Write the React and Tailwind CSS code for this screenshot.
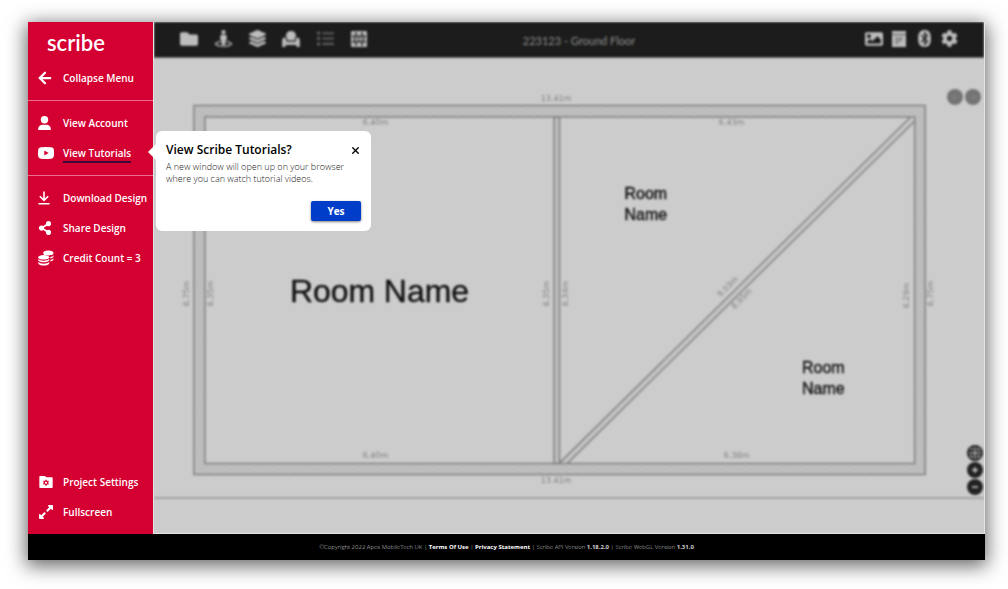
import React, { useState } from 'react';
import { FaBluetooth, FaCog, FaExpandAlt, FaFolder, FaImage, FaLayerGroup, FaList, FaShareAlt, FaStreetView } from 'react-icons/fa';
import { RiFolderSettingsFill } from 'react-icons/ri';
import { ArrowLeft, X } from 'lucide-react';

const PersonIcon = () => (
  <svg viewBox="0 0 14 14" className="h-3.5 w-3.5" fill="currentColor">
    <circle cx="6.500" cy="3.700" r="3.700" />
    <path d="M.5 14q-.5 0-.4-.8Q.5 8.700 4.500 8.700h4q4 0 4.400 4.500.1.8-.5.8Z" />
  </svg>
);

const YoutubeIcon = () => (
  <svg viewBox="0 0 16 12" className="w-4 h-3" fill="currentColor">
    <path fillRule="evenodd" d="M3 .2Q8-.2 13 .2 15.800.4 15.900 3q.2 3 0 6-.3 2.500-2.900 2.800-5 .4-10 0Q.4 11.500.1 9-.1 6 .1 3 .4.500 3 .2ZM6.300 3.500v5l4.400-2.500Z" />
  </svg>
);

const DownloadIcon = () => (
  <svg viewBox="0 0 12 14" className="h-3.5 w-3" fill="none" stroke="currentColor" strokeWidth="1.600">
    <path d="M6 .5v8.300M1.800 5.200 6 9.300l4.200-4.100M.5 12.700h11" />
  </svg>
);

const CoinsIcon = () => (
  <svg viewBox="0 0 16 16" className="w-4 h-4" fill="currentColor">
    <ellipse cx="10.300" cy="2.900" rx="5.200" ry="2.500" />
    <path d="M12.200 7.100q2.700-.5 3.400-1.900v1.400q-.6 1.500-3.200 2ZM12.400 10q2.400-.5 3.100-1.800v1.400q-.6 1.400-3.100 1.900Z" />
    <ellipse cx="5.700" cy="7.300" rx="5.500" ry="2.300" />
    <path d="M.3 9q1.300 1.700 5.400 1.700T11.200 9v1.400q-1.300 1.800-5.500 1.800T.3 10.400ZM.3 12q1.300 1.700 5.400 1.700T11.200 12v1.600q-1.300 2-5.500 2t-5.400-2Z" />
  </svg>
);

const ArmchairIcon = () => (
  <svg viewBox="0 0 18 16" className="h-4 w-[18px]" fill="currentColor">
    <path d="M4 5.500Q4 0 9 0t5 5.500Q12.800 6.500 12.500 9.500h-7Q5.200 6.500 4 5.500Z" />
    <path d="M2.500 6.500q1.900.2 2 4.300h9q.1-4.100 2-4.300 2.300.3 2.300 3.500v6h-3.300v-2h-11v2H.2v-6q0-3.200 2.300-3.500Z" />
  </svg>
);

const TilesIcon = () => (
  <svg viewBox="0 0 16 16" className="w-4 h-4">
    <rect width="16" height="16" rx="1" fill="#b8b8b8" />
    <path d="M1 5.300h14M1 10.700h14M5 1v4.300M11 1v4.300M3.500 5.300v5.400M12.500 5.300v5.400M5 10.700V15M11 10.700V15" stroke="#333" strokeWidth="1.500" />
    <path d="M8 5.800 10.200 8 8 10.200 5.800 8Z" fill="#b8b8b8" stroke="#333" />
  </svg>
);

const NotesIcon = () => (
  <svg viewBox="0 0 16 16" className="w-4 h-4">
    <path d="M1 0h14v16H1Z" fill="#bdbdbd" />
    <path d="M1 3.500h14M4 7h8M4 9.500h7M4 12h4" stroke="#555" strokeWidth="1.200" />
  </svg>
);

const accountItems = [{ label: 'View Account', icon: <PersonIcon /> }];

const designItems = [
  { label: 'Download Design', icon: <DownloadIcon /> },
  { label: 'Share Design', icon: <FaShareAlt size={14} /> },
  { label: 'Credit Count = 3', icon: <CoinsIcon /> }
];

const bottomItems = [
  { label: 'Project Settings', icon: <RiFolderSettingsFill size={16} /> },
  { label: 'Fullscreen', icon: <FaExpandAlt size={16} /> }
];

const leftTools = [
  { label: 'Projects', icon: <FaFolder size={18} /> },
  { label: 'Street view', icon: <FaStreetView size={17} /> },
  { label: 'Layers', icon: <FaLayerGroup size={17} /> },
  { label: 'Furniture', icon: <ArmchairIcon /> },
  { label: 'List', icon: <FaList size={17} className="text-[#5c5c5c]" /> },
  { label: 'Tiles', icon: <TilesIcon /> }
];

const rightTools = [
  { label: 'Images', icon: <FaImage size={18} /> },
  { label: 'Notes', icon: <NotesIcon /> },
  { label: 'Bluetooth', icon: <FaBluetooth size={17} /> },
  { label: 'Settings', icon: <FaCog size={17} /> }
];

function MenuItem({ icon, label, active }) {
  return (
    <button className="flex h-[30px] w-full items-center gap-[9px] pl-2.5 text-left text-[10px] leading-4 font-semibold whitespace-nowrap">
      <span className="flex w-4 shrink-0 items-center justify-start">{icon}</span>
      <span className={active ? 'border-b-2 border-[#3a0a3c] pt-0.5' : ''}>{label}</span>
    </button>
  );
}

function TutorialPopup({ onClose }) {
  return (
    <div role="dialog" aria-labelledby="popup-title" className="absolute -top-[7px] left-full z-20 ml-[3px] w-[215px] rounded-md bg-white p-2.5 text-black">
      <svg viewBox="0 0 9 18" className="absolute top-3 -left-2 h-[18px] w-[9px]" fill="white">
        <path d="M9 0v18L0 9Z" />
      </svg>
      <div className="flex items-center justify-between">
        <h2 id="popup-title" className="text-[12px] leading-[18px] font-semibold">View Scribe Tutorials?</h2>
        <button aria-label="Close" onClick={onClose}>
          <X size={11} strokeWidth={3} />
        </button>
      </div>
      <p className="mt-0.5 text-[9px] leading-3 font-light text-[#222]">
        A new window will open up on your browser<br />where you can watch tutorial videos.
      </p>
      <div className="mt-4 flex justify-end">
        <button onClick={onClose} className="h-5 w-[50px] rounded-xs bg-[#003dc8] text-[10px] font-bold text-white shadow-sm shadow-black/40">Yes</button>
      </div>
    </div>
  );
}

function Sidebar() {
  const [showPopup, setShowPopup] = useState(true);

  return (
    <nav className="relative z-10 flex w-[125px] shrink-0 flex-col bg-[#d50032] text-white">
      <div className="flex h-[41px] items-center pl-[19px] font-['Lato',sans-serif] text-[22px] leading-6 font-semibold">scribe</div>
      <div className="border-b border-[#e8708c] pb-[7px]">
        <MenuItem label="Collapse Menu" icon={<ArrowLeft size={18} strokeWidth={3} className="-ml-0.5 shrink-0" />} />
      </div>
      <div className="border-b border-[#e8708c] py-[7px]">
        {accountItems.map((item) => <MenuItem key={item.label} {...item} />)}
        <div className="relative">
          <MenuItem label="View Tutorials" icon={<YoutubeIcon />} active />
          {showPopup && <TutorialPopup onClose={() => setShowPopup(false)} />}
        </div>
      </div>
      <div className="pt-[7px]">
        {designItems.map((item) => <MenuItem key={item.label} {...item} />)}
      </div>
      <div className="mt-auto pb-[7px]">
        {bottomItems.map((item) => <MenuItem key={item.label} {...item} />)}
      </div>
    </nav>
  );
}

function Toolbar() {
  return (
    <header className="grid h-9 grid-cols-[1fr_auto_1fr] items-center border-b border-[#666] bg-[#1c1c1c] px-[26px] pb-0.5 text-[#bdbdbd]">
      <div className="flex gap-4">
        {leftTools.map((t) => (
          <button key={t.label} aria-label={t.label} className="flex w-[18px] items-center justify-center">{t.icon}</button>
        ))}
      </div>
      <h1 className="pt-1 pl-5 font-['Lato',sans-serif] text-[11px] leading-4 text-[#8c8c8c]">223123 - Ground Floor</h1>
      <div className="flex justify-end gap-[7px]">
        {rightTools.map((t) => (
          <button key={t.label} aria-label={t.label} className="flex w-[18px] items-center justify-center">{t.icon}</button>
        ))}
      </div>
    </header>
  );
}

function FloorPlan() {
  return (
    <svg viewBox="153 58 832 476" className="h-full w-full">
      <defs>
        <pattern id="hatch" width="4" height="4" patternUnits="userSpaceOnUse" patternTransform="rotate(25)">
          <rect width="4" height="4" fill="#c2c2c2" />
          <path d="M0 1h4" stroke="#afafaf" />
        </pattern>
      </defs>
      {/* walls */}
      <g fill="url(#hatch)" stroke="#808080" strokeWidth="1.500">
        <path fillRule="evenodd" d="M193 105.500H926V475.500H193ZM204 117V464.500H915.500V117Z" />
        <path d="M554 117V464.500H559.500V117Z" />
        <path d="M560 463.500 911 117.500M567 464.500 915.500 121" fill="none" />
        <path d="M563.500 464 913 119.500" strokeWidth="1" stroke="#b0b0b0" />
      </g>
      <path d="M153 499H985" stroke="#a3a3a3" strokeWidth="2" />
      {/* dimensions */}
      <g fill="#808080" fontSize="8" textAnchor="middle" className="font-['DejaVu_Sans',sans-serif]">
        <text x="556" y="101">13.41m</text>
        <text x="556" y="484">13.41m</text>
        <text x="375" y="125">6.40m</text>
        <text x="375" y="459">6.40m</text>
        <text x="732" y="125">6.43m</text>
        <text x="737" y="459">6.38m</text>
        <text transform="translate(188 294) rotate(-90)">6.75m</text>
        <text transform="translate(212 294) rotate(-90)">6.35m</text>
        <text transform="translate(549 294) rotate(-90)">6.35m</text>
        <text transform="translate(568 294) rotate(-90)">6.34m</text>
        <text transform="translate(910 296) rotate(-90)">6.29m</text>
        <text transform="translate(934 294) rotate(-90)">6.75m</text>
        <text transform="translate(730 289) rotate(-45)">9.03m</text>
        <text transform="translate(744 301) rotate(-45)">8.95m</text>
      </g>
      {/* room labels */}
      <g fill="#111" stroke="#111" strokeWidth="0.400" textAnchor="middle" className="font-['Liberation_Sans_Narrow','Arial_Narrow','Liberation_Sans',sans-serif]">
        <text x="379" y="303" fontSize="32">Room Name</text>
        <g fontSize="16">
          <text x="646" y="199">Room</text>
          <text x="646" y="220">Name</text>
          <text x="824" y="374">Room</text>
          <text x="824" y="395">Name</text>
        </g>
      </g>
    </svg>
  );
}

function RoundButton({ label, className, children }) {
  return (
    <button aria-label={label} className={`flex size-4 items-center justify-center rounded-full ${className}`}>
      <svg viewBox="0 0 16 16" className="size-4" fill="none" stroke="currentColor" strokeWidth="1.500">{children}</svg>
    </button>
  );
}

export default function App() {
  return (
    <div className="flex min-h-screen bg-white pt-[22px] pr-[23px] pb-[29px] pl-7 font-['Open_Sans',sans-serif]">
      <div className="flex min-w-0 flex-1 flex-col shadow-[0_4px_18px_2px_rgba(0,0,0,0.6)]">
        <div className="flex flex-1">
          <Sidebar />
          <main className="min-w-0 flex-1 overflow-hidden border-r border-b border-l border-[#e4e4e4] bg-[#ccc]">
            <div className="flex h-full flex-col blur-[1px]">
              <Toolbar />
              <div className="relative min-h-0 flex-1">
                <FloorPlan />
                <div className="absolute top-[31px] right-[3px] flex gap-0.5">
                  <RoundButton label="Undo" className="bg-[#747474] text-[#7e7e7e]"><path d="M5 8h6M8 5 5 8l3 3" /></RoundButton>
                  <RoundButton label="Redo" className="bg-[#747474] text-[#7e7e7e]"><path d="M5 8h6M8 5l3 3-3 3" /></RoundButton>
                </div>
                <div className="absolute right-[1px] bottom-[38px] flex flex-col gap-[1px]">
                  <RoundButton label="Fit" className="bg-[#222] text-[#aaa]"><path d="M8 2v12M2 8h12M4 5V4h2M10 4h2v2M4 10v2h2M10 12h2v-2" /></RoundButton>
                  <RoundButton label="Zoom in" className="bg-[#222] text-[#ccc]"><path d="M8 5v6M5 8h6" /></RoundButton>
                  <RoundButton label="Zoom out" className="bg-[#222] text-[#ccc]"><path d="M5 8h6" /></RoundButton>
                </div>
              </div>
            </div>
          </main>
        </div>
        <footer className="flex h-[26px] items-center justify-center bg-black text-[6px] leading-4 font-light whitespace-pre text-[#ccc]">
          <p>
            ©Copyright 2022 Apex MobileTech UK | <a href="#terms" className="font-bold text-white">Terms Of Use</a> | <a href="#privacy" className="font-bold text-white">Privacy Statement</a> | Scribe API Version <b className="font-bold text-[#ccc]">1.18.2.0</b> | Scribe WebGL Version <b className="font-bold text-[#ccc]">1.31.0</b>
          </p>
        </footer>
      </div>
    </div>
  );
}
